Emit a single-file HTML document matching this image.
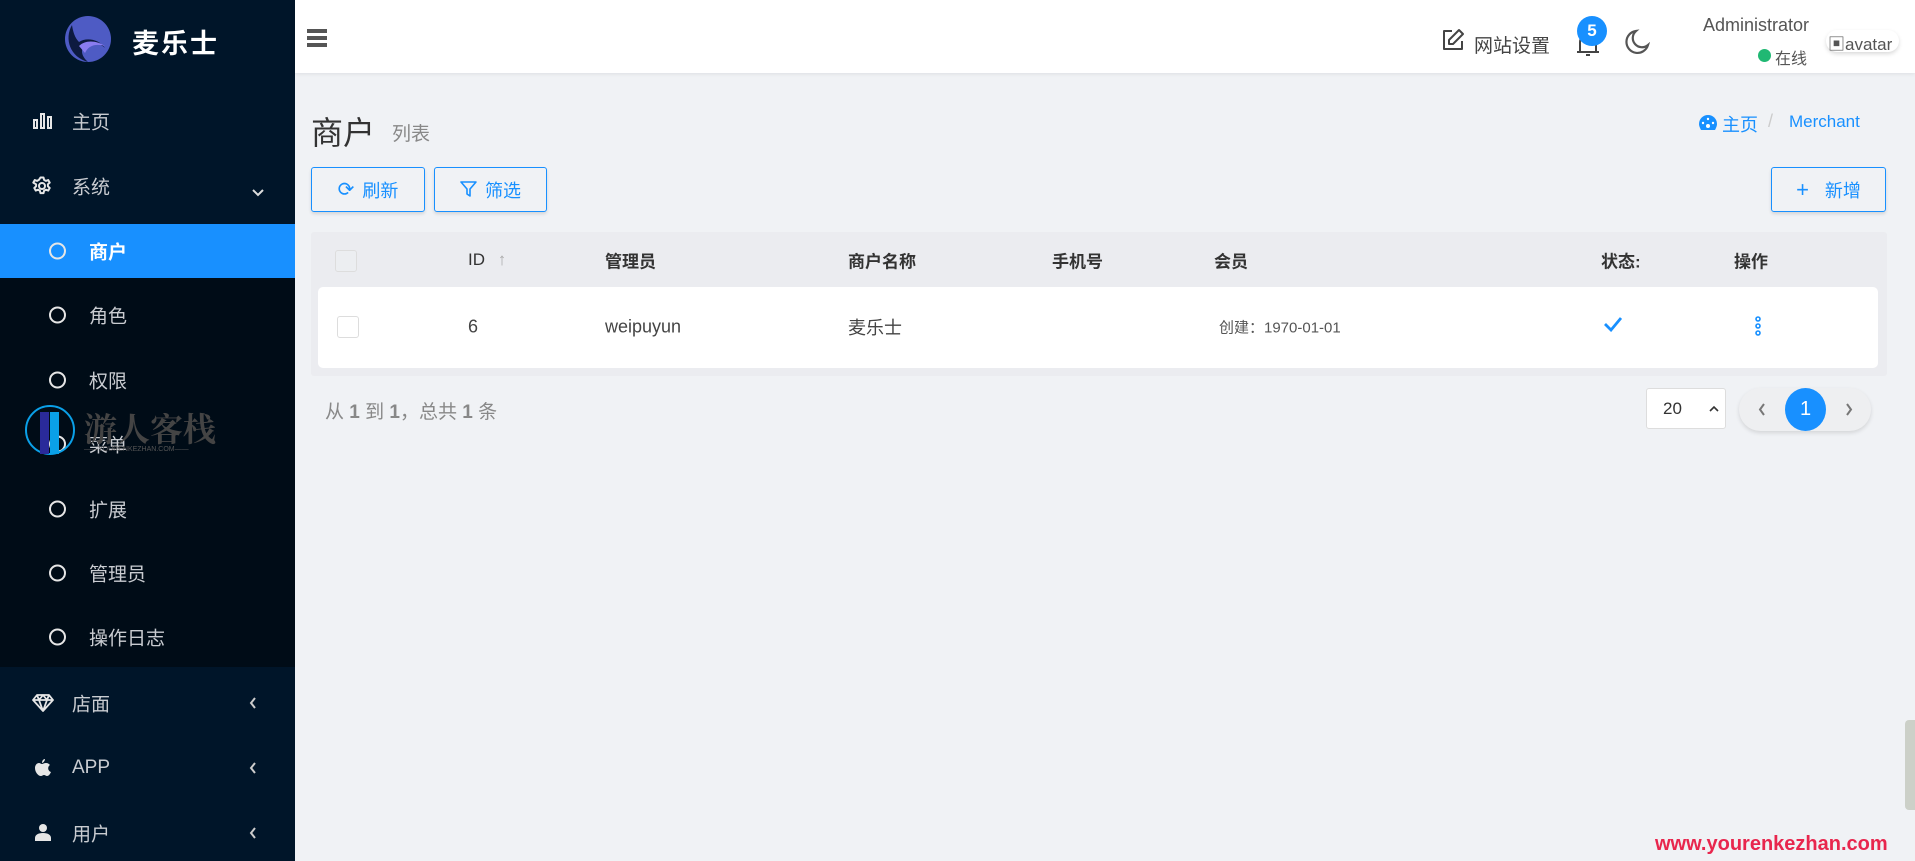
<!DOCTYPE html>
<html><head><meta charset="utf-8"><style>
*{margin:0;padding:0;box-sizing:border-box}
body{width:1915px;height:861px;overflow:hidden;background:#f0f2f5;font-family:"Liberation Sans","Noto Sans CJK SC",sans-serif;position:relative}
.a{position:absolute;white-space:nowrap}
#side{position:absolute;left:0;top:0;width:295px;height:861px;background:#001529}
.sub{position:absolute;left:0;top:224px;width:295px;height:443px;background:#000c17}
.mi{position:absolute;left:72px;font-size:19px;color:#c9ccd1;transform:translateY(-50%)}
.si{position:absolute;left:89px;font-size:19px;color:#c9ccd1;transform:translateY(-50%)}
.circ{position:absolute;left:49px;width:17px;height:17px;border:2px solid #e6e6e6;border-radius:50%;transform:translateY(-50%)}
.chev{position:absolute;left:249px}
.th{position:absolute;top:260px;transform:translateY(-50%);font-size:17px;font-weight:bold;color:#333}
.td{position:absolute;top:327px;transform:translateY(-50%);font-size:18px;color:#444}
.btn{position:absolute;top:167px;height:45px;border:1px solid #1890ff;border-radius:3px;color:#1890ff;font-size:18px;display:flex;align-items:center;justify-content:center;gap:8px;box-shadow:0 2px 3px rgba(0,0,0,.12)}
</style></head><body>
<div id="side">
 <div class="sub"></div>
 <svg class="a" style="left:64px;top:15px" width="48" height="48" viewBox="0 0 48 48"><circle cx="24" cy="24" r="23" fill="#4e5bc4"/><path d="M8 10 C0 24 6 42 24 47 C16 40 16 32 24 29 C31 27 37 29 41 33 C35 24 22 22 15 27 C11 23 9 17 8 10Z" fill="#0d1a40"/><path d="M15 31 C21 25 32 25 41 31 C31 28 24 31 21 38Z" fill="#8a7cf0"/></svg>
 <div class="a" style="left:132px;top:22px;font-size:27px;font-weight:bold;color:#fff;letter-spacing:2px">麦乐士</div>
 <svg class="a" style="left:33px;top:112px" width="19" height="17" viewBox="0 0 19 17"><g fill="none" stroke="#e6e6e6" stroke-width="2"><rect x="1" y="8" width="3" height="8"/><rect x="8" y="2" width="3" height="14"/><rect x="15" y="5" width="3" height="11"/></g></svg>
 <div class="mi" style="top:121px">主页</div>
 <svg class="a" style="left:32px;top:176px" width="20" height="20" viewBox="0 0 20 20"><g fill="none" stroke="#e6e6e6" stroke-width="2"><circle cx="10" cy="10" r="3"/><path d="M8.5 1.5h3l.6 2.4 1.8 1 2.3-.9 1.5 2.6-1.8 1.7v2l1.8 1.7-1.5 2.6-2.3-.9-1.8 1-.6 2.4h-3l-.6-2.4-1.8-1-2.3.9-1.5-2.6 1.8-1.7v-2L1.3 6.6l1.5-2.6 2.3.9 1.8-1z" stroke-linejoin="round"/></g></svg>
 <div class="mi" style="top:186px">系统</div>
 <svg class="chev" style="top:189px;left:252px" width="12" height="8" viewBox="0 0 12 8"><path d="M1 1l5 5 5-5" fill="none" stroke="#ddd" stroke-width="2"/></svg>
 <div class="a" style="left:0;top:224px;width:295px;height:54px;background:#1890ff"></div>
 <div class="circ" style="top:251px"></div>
 <div class="si" style="top:251px;color:#fff;font-weight:bold">商户</div>
 <div class="circ" style="top:315px"></div><div class="si" style="top:315px">角色</div>
 <div class="circ" style="top:380px"></div><div class="si" style="top:380px">权限</div>
 <div class="circ" style="top:444px"></div><div class="si" style="top:444px">菜单</div>
 <div class="circ" style="top:509px"></div><div class="si" style="top:509px">扩展</div>
 <div class="circ" style="top:573px"></div><div class="si" style="top:573px">管理员</div>
 <div class="circ" style="top:637px"></div><div class="si" style="top:637px">操作日志</div>
 <svg class="a" style="left:32px;top:694px" width="22" height="18" viewBox="0 0 22 18"><path d="M5 1h12l4 5-10 11L1 6z M1 6h20 M7 6l4 11 4-11 M5 1l2 5 4-5 4 5 2-5" fill="none" stroke="#e6e6e6" stroke-width="1.8" stroke-linejoin="round"/></svg>
 <div class="mi" style="top:703px">店面</div>
 <svg class="chev" style="top:697px" width="8" height="12" viewBox="0 0 8 12"><path d="M6 1L2 6l4 5" fill="none" stroke="#ccc" stroke-width="2"/></svg>
 <svg class="a" style="left:34px;top:758px" width="17" height="19" viewBox="0 0 17 19"><path d="M11 1c0 2-2 4-3 4 0-2 1-4 3-4z M8 6c1 0 2-1 4-1 2 0 3 1 4 2-3 2-2 6 1 7-1 2-2 4-4 4-1 0-2-1-3-1s-2 1-3 1C4 18 1 14 1 10c0-3 2-5 4-5 1 0 2 1 3 1z" fill="#e6e6e6"/></svg>
 <div class="mi" style="top:768px">APP</div>
 <svg class="chev" style="top:762px" width="8" height="12" viewBox="0 0 8 12"><path d="M6 1L2 6l4 5" fill="none" stroke="#ccc" stroke-width="2"/></svg>
 <svg class="a" style="left:35px;top:823px" width="16" height="18" viewBox="0 0 16 18"><circle cx="8" cy="5" r="4" fill="#e6e6e6"/><path d="M0 18v-3c0-3 3-5 8-5s8 2 8 5v3z" fill="#e6e6e6"/></svg>
 <div class="mi" style="top:833px">用户</div>
 <svg class="chev" style="top:827px" width="8" height="12" viewBox="0 0 8 12"><path d="M6 1L2 6l4 5" fill="none" stroke="#ccc" stroke-width="2"/></svg>
 <svg class="a" style="left:24px;top:404px" width="52" height="52" viewBox="0 0 52 52"><circle cx="26" cy="26" r="24" fill="none" stroke="#0aa0e8" stroke-width="2"/><rect x="16" y="8" width="9" height="42" fill="#2a2a9a"/><rect x="26" y="8" width="9" height="42" fill="#0aa0e8"/></svg>
 <div class="a" style="left:84px;top:404px;font-size:33px;font-weight:bold;color:#444;font-family:'Noto Serif CJK SC',serif">游人客栈</div>
 <div class="a" style="left:84px;top:446px;font-size:7px;color:#555">——YOURENKEZHAN.COM——</div>
</div>
<div class="a" style="left:295px;top:0;width:1620px;height:73px;background:#fff;box-shadow:0 1px 4px rgba(0,0,0,.08)"></div>
<div class="a" style="left:307px;top:29px;width:20px;height:4px;background:#555;box-shadow:0 7px 0 #555,0 14px 0 #555"></div>
<svg class="a" style="left:1441px;top:28px" width="24" height="24" viewBox="0 0 24 24"><path d="M11 3H3v18h18v-8 M18 2l4 4-10 10H8v-4z" fill="none" stroke="#444" stroke-width="2" stroke-linejoin="round"/></svg>
<div class="a" style="left:1474px;top:31px;font-size:19px;color:#444">网站设置</div>
<svg class="a" style="left:1575px;top:30px" width="26" height="28" viewBox="0 0 26 28"><path d="M5 22V12a8 8 0 0116 0v10 M2 22h22 M11 25h4" fill="none" stroke="#444" stroke-width="2"/></svg>
<div class="a" style="left:1577px;top:16px;width:30px;height:30px;border-radius:50%;background:#1890ff;color:#fff;font-size:17px;font-weight:bold;text-align:center;line-height:30px">5</div>
<svg class="a" style="left:1624px;top:29px" width="26" height="26" viewBox="0 0 26 26"><path d="M12 2a11 11 0 1012 14A9 9 0 0112 2z" fill="none" stroke="#555" stroke-width="2.2"/></svg>
<div class="a" style="left:1680px;top:15px;width:129px;text-align:right;font-size:18px;color:#555">Administrator</div>
<div class="a" style="left:1758px;top:49px;width:13px;height:13px;border-radius:50%;background:#20b873"></div>
<div class="a" style="left:1775px;top:45px;font-size:16px;color:#555">在线</div>
<div class="a" style="left:1826px;top:30px;width:73px;height:22px;border-radius:11px;background:#fff;box-shadow:0 2px 4px rgba(0,0,0,.15);font-size:17px;color:#555;padding-left:2px">&#9635;avatar</div>

<div class="a" style="left:311px;top:108px;font-size:32px;color:#333">商户</div>
<div class="a" style="left:392px;top:119px;font-size:19px;color:#888">列表</div>
<svg class="a" style="left:1699px;top:115px" width="18" height="15" viewBox="0 0 18 15"><path d="M9 0a9 9 0 00-9 9c0 2 1 4 2 6h14c1-2 2-4 2-6a9 9 0 00-9-9z" fill="#1890ff"/><circle cx="9" cy="11" r="2" fill="#fff"/><circle cx="4" cy="8" r="1.2" fill="#fff"/><circle cx="14" cy="8" r="1.2" fill="#fff"/><circle cx="9" cy="4" r="1.2" fill="#fff"/></svg>
<div class="a" style="left:1722px;top:111px;font-size:18px;color:#1890ff">主页</div>
<div class="a" style="left:1768px;top:111px;font-size:18px;color:#ccc">/</div>
<div class="a" style="left:1789px;top:112px;font-size:17px;color:#1890ff">Merchant</div>

<div class="btn" style="left:311px;width:114px"><span style="font-size:20px">&#10227;</span>刷新</div>
<div class="btn" style="left:434px;width:113px"><svg width="17" height="17" viewBox="0 0 17 17"><path d="M1 1h15l-6 7v7l-3-2V8z" fill="none" stroke="#1890ff" stroke-width="1.6" stroke-linejoin="round"/></svg>筛选</div>
<div class="btn" style="left:1771px;width:115px;gap:16px"><span style="font-size:22px">+</span>新增</div>

<div class="a" style="left:311px;top:232px;width:1576px;height:144px;background:#ebecf0;border-radius:3px"></div>
<div class="a" style="left:335px;top:250px;width:22px;height:22px;border:1px solid #ddd;border-radius:3px;background:#eceef1"></div>
<div class="th" style="left:468px;font-weight:normal">ID <span style="color:#aaa;margin-left:8px">&#8593;</span></div>
<div class="th" style="left:605px">管理员</div>
<div class="th" style="left:848px">商户名称</div>
<div class="th" style="left:1052px">手机号</div>
<div class="th" style="left:1214px">会员</div>
<div class="th" style="left:1601px">状态:</div>
<div class="th" style="left:1734px">操作</div>
<div class="a" style="left:318px;top:287px;width:1560px;height:81px;background:#fff;border-radius:5px"></div>
<div class="a" style="left:337px;top:316px;width:22px;height:22px;border:1px solid #ddd;border-radius:3px;background:#fff"></div>
<div class="td" style="left:468px">6</div>
<div class="td" style="left:605px">weipuyun</div>
<div class="td" style="left:848px">麦乐士</div>
<div class="td" style="left:1219px;font-size:15px;color:#555">创建：1970-01-01</div>
<svg class="a" style="left:1603px;top:316px" width="20" height="16" viewBox="0 0 20 16"><path d="M2 8l6 6L18 2" fill="none" stroke="#1890ff" stroke-width="2.8"/></svg>
<svg class="a" style="left:1754px;top:316px" width="8" height="20" viewBox="0 0 8 20"><g fill="none" stroke="#1890ff" stroke-width="1.6"><circle cx="4" cy="3" r="2"/><circle cx="4" cy="10" r="2"/><circle cx="4" cy="17" r="2"/></g></svg>

<div class="a" style="left:325px;top:397px;font-size:19px;color:#888">从 <b>1</b> 到 <b>1</b>，总共 <b>1</b> 条</div>
<div class="a" style="left:1646px;top:388px;width:80px;height:41px;background:#fff;border:1px solid #ddd;border-radius:3px"></div>
<div class="a" style="left:1663px;top:399px;font-size:17px;color:#333">20</div>
<svg class="a" style="left:1709px;top:405px" width="10" height="7" viewBox="0 0 10 7"><path d="M1 6l4-4 4 4" fill="none" stroke="#333" stroke-width="1.6"/></svg>
<div class="a" style="left:1739px;top:388px;width:132px;height:43px;border-radius:22px;background:#eeeff1;box-shadow:0 2px 4px rgba(0,0,0,.12)"></div>
<svg class="a" style="left:1758px;top:403px" width="8" height="13" viewBox="0 0 8 13"><path d="M6 1L2 6.5 6 12" fill="none" stroke="#777" stroke-width="2"/></svg>
<div class="a" style="left:1785px;top:388px;width:41px;height:43px;border-radius:50%;background:#1890ff;color:#fff;font-size:20px;text-align:center;line-height:43px">1</div>
<svg class="a" style="left:1845px;top:403px" width="8" height="13" viewBox="0 0 8 13"><path d="M2 1l4 5.5L2 12" fill="none" stroke="#777" stroke-width="2"/></svg>
<div class="a" style="left:1905px;top:720px;width:10px;height:90px;background:#ccd0c8;border-radius:4px 0 0 4px"></div>
<div class="a" style="left:1655px;top:833px;font-size:20px;font-weight:bold;color:#e8264d">www.yourenkezhan.com</div>
</body></html>
